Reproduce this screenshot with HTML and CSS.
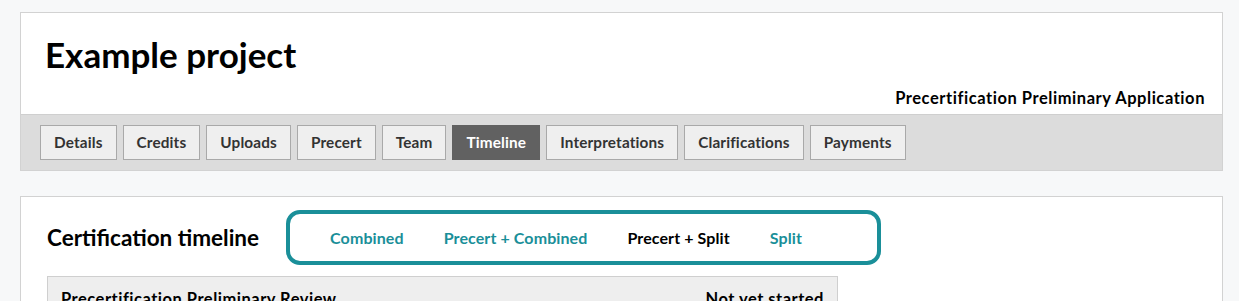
FILE: index.html
```html
<!DOCTYPE html>
<html lang="en">

<head>
    <meta charset="UTF-8">
    <meta name="viewport" content="width=device-width, initial-scale=1.0">
    <title>Example project - Timeline</title>
    <link rel="stylesheet" href="styles.css">
</head>

<body>
    <div class="project-card">
        <div class="project-header">
            <h1 class="project-title">Example project</h1>
            <div class="project-phase">Precertification Preliminary Application</div>
        </div>
        <nav class="tab-bar">
            <a class="tab">Details</a>
            <a class="tab">Credits</a>
            <a class="tab">Uploads</a>
            <a class="tab">Precert</a>
            <a class="tab">Team</a>
            <a class="tab active">Timeline</a>
            <a class="tab">Interpretations</a>
            <a class="tab">Clarifications</a>
            <a class="tab">Payments</a>
        </nav>
    </div>

    <div class="timeline-card">
        <div class="timeline-head">
            <h2 class="timeline-title">Certification timeline</h2>
            <div class="path-switch">
                <a class="path-option">Combined</a>
                <a class="path-option">Precert + Combined</a>
                <a class="path-option current">Precert + Split</a>
                <a class="path-option">Split</a>
            </div>
        </div>

        <div class="phase-table">
            <div class="phase-row">
                <span class="phase-name">Precertification Preliminary Review</span>
                <span class="phase-status">Not yet started</span>
            </div>
        </div>
    </div>
</body>

</html>
```

FILE: styles.css
```css
* {
    margin: 0;
    padding: 0;
    box-sizing: border-box;
}

body {
    font-family: 'Lato', 'Liberation Sans', sans-serif;
    background-color: #f7f8f9;
    color: #000;
    padding: 12px 16px 0 20px;
    overflow: hidden;
}

.project-card {
    background-color: #fff;
    border: 1px solid #d2d2d2;
}

.project-header {
    padding: 19px 17px 6px 24px;
}

.project-title {
    font-size: 35px;
    font-weight: 700;
    line-height: 44px;
}

.project-phase {
    text-align: right;
    font-size: 16.5px;
    letter-spacing: 0.55px;
    font-weight: 700;
    line-height: 20px;
    margin-top: 12px;
}

.tab-bar {
    display: flex;
    gap: 6px;
    padding: 10px 19px;
    background-color: #dcdcdc;
    border-top: 1px solid #cfcfcf;
}

.tab {
    display: block;
    height: 35px;
    line-height: 33px;
    padding: 0 13px;
    font-size: 15.3px;
    letter-spacing: 0.15px;
    font-weight: 700;
    color: #333;
    background-color: #efefef;
    border: 1px solid #a9a9a9;
    cursor: pointer;
}

.tab.active {
    background-color: #616161;
    border-color: #616161;
    color: #fff;
}

.timeline-card {
    margin-top: 25px;
    background-color: #fff;
    border: 1px solid #d2d2d2;
    border-bottom: none;
    height: 200px;
    padding: 13px 26px 0 26px;
}

.timeline-head {
    display: flex;
    align-items: center;
    gap: 27px;
}

.timeline-title {
    font-size: 22.5px;
    font-weight: 700;
}

.path-switch {
    display: flex;
    gap: 40px;
    height: 55px;
    align-items: center;
    padding: 0 75px 0 40px;
    border: 4px solid #1a8f99;
    border-radius: 14px;
}

.path-option {
    font-size: 16px;
    letter-spacing: 0.1px;
    font-weight: 700;
    color: #1a8f99;
    cursor: pointer;
}

.path-option.current {
    color: #000;
}

.phase-table {
    margin-top: 11px;
    width: 791px;
    background-color: #eee;
    border: 1px solid #cfcfcf;
}

.phase-row {
    display: flex;
    justify-content: space-between;
    padding: 12px 13px;
    font-size: 16.5px;
    letter-spacing: 0.5px;
    font-weight: 700;
}
```
